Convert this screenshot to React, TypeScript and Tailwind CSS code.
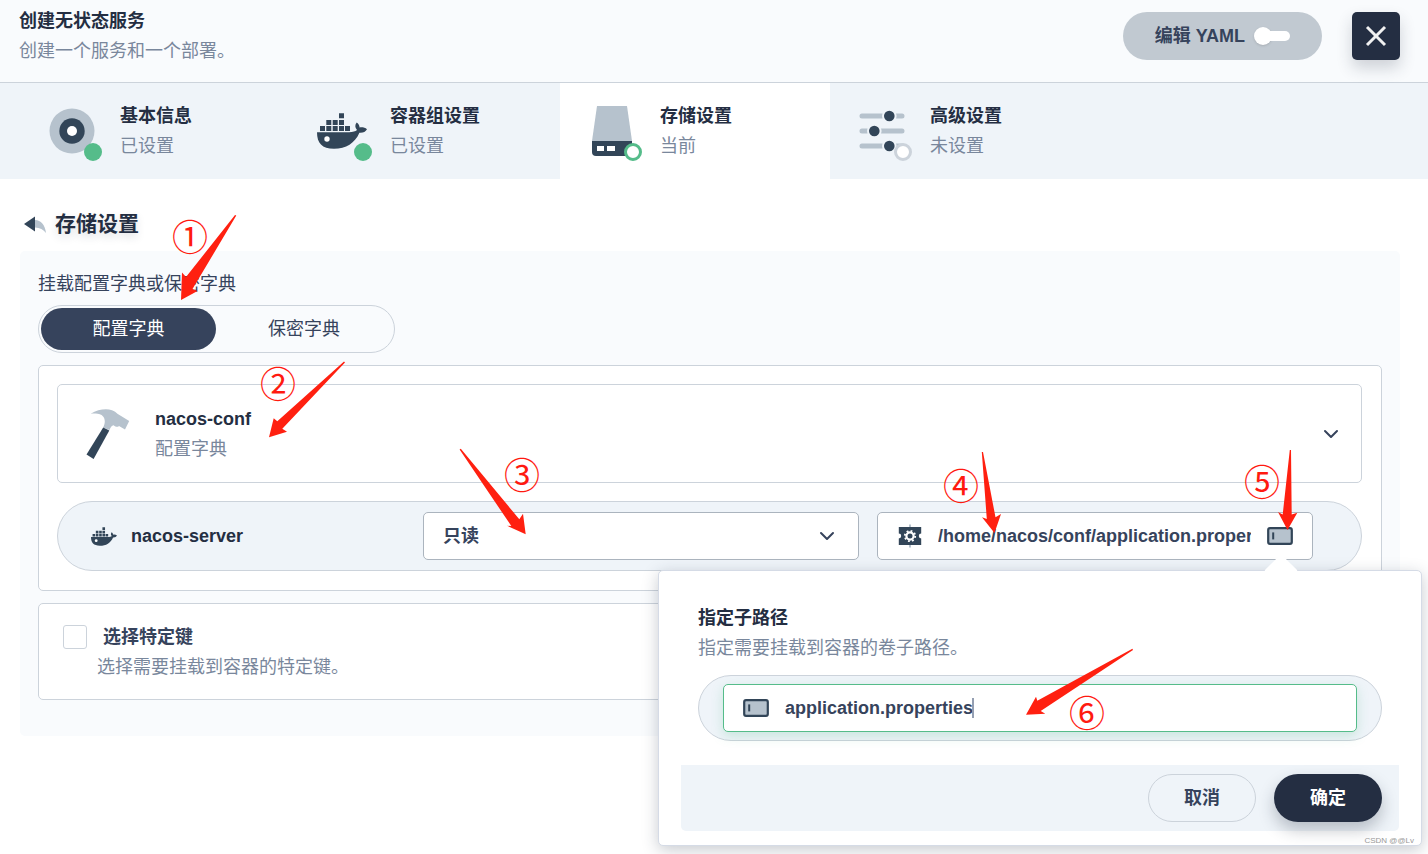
import { useState } from 'react';
import type { ReactNode } from 'react';
import { ChevronDown, X } from 'lucide-react';
import clsx from 'clsx';

type StepStatus = 'done' | 'current' | 'todo';

interface Step {
  id: string;
  title: string;
  desc: string;
  status: StepStatus;
  icon: ReactNode;
}

function DockerIcon({ className }: { className?: string }) {
  return (
    <svg viewBox="0 0 50 36" className={className} fill="#324558" aria-hidden="true">
      <path d="M22 0.3h5v5h-5zM9.3 7h5v5h-5zM15.7 7h5v5h-5zM22 7h5v5h-5zM3 13.1h5v5H3zM9.3 13.1h5v5h-5zM15.7 13.1h5v5h-5zM22 13.1h5v5h-5zM28 13.1h5v5h-5z" />
      <path d="M0 19.2H32C36 19.2 38.4 18.4 40 17C37.8 14.6 37.8 12 39.7 9.6C41.6 11 42.5 12.8 42.6 14.4C45 13.9 48 14.4 50 16.2C48.4 19 46 20 42.4 19.7C38 30 29 35.8 17 35.8C5 35.8 0 30 0 19.2Z" />
      <circle cx="10" cy="26" r="2.7" fill="#fff" />
    </svg>
  );
}

function RecordIcon() {
  return (
    <svg viewBox="0 0 60 60" className="size-[60px]" aria-hidden="true">
      <circle cx="30" cy="30" r="22.5" fill="#b6c2cd" />
      <circle cx="30" cy="30" r="12.7" fill="#324558" />
      <circle cx="30" cy="30" r="5" fill="#fff" />
    </svg>
  );
}

function DiskIcon() {
  return (
    <svg viewBox="0 0 60 60" className="size-[60px]" aria-hidden="true">
      <path d="M15 5h30l5 35H10z" fill="#b6c2cd" />
      <path d="M10 40h40v11a4 4 0 0 1-4 4H14a4 4 0 0 1-4-4z" fill="#324558" />
      <path d="M15 45h7v5h-7zM25 45h8v5h-8z" fill="#fff" />
    </svg>
  );
}

function SlidersIcon() {
  return (
    <svg viewBox="0 0 60 60" className="size-[60px]" aria-hidden="true">
      <path d="M10 15h40M10 30h40M10 45h40" stroke="#b6c2cd" strokeWidth="5" strokeLinecap="round" />
      <g fill="#324558" stroke="#eff4f9" strokeWidth="2">
        <circle cx="37.3" cy="15" r="6.3" />
        <circle cx="22.3" cy="30" r="6.3" />
        <circle cx="37.3" cy="45" r="6.3" />
      </g>
    </svg>
  );
}

function HammerIcon() {
  return (
    <svg viewBox="0 0 44 50" className="h-[50px] w-11 shrink-0" aria-hidden="true">
      <path
        d="M4.6 4.8C12 0.4 20 -0.6 26 1.2C28.4 2 30 3.4 31.4 4.8L43.2 12L39 20.4L33 17C31.4 18.6 29.6 17.8 27.6 16.2C25.6 16.2 24.6 18.4 23.4 21L17.2 18.4C18.6 15.4 19.4 12.6 18.2 9.2C16.4 4.8 10.6 4.2 4.6 4.8Z"
        fill="#b6c2cd"
      />
      <path d="M17.2 18.6L23.3 21.4L7.6 50L0.5 45.6Z" fill="#324558" />
    </svg>
  );
}

function BackIcon() {
  return (
    <svg viewBox="0 0 24 18" className="h-[18px] w-6" aria-hidden="true">
      <path d="M12 5C18 5.4 22 9.6 23 18C20.4 14.6 17 12.8 12 12.6Z" fill="#b6c2cd" />
      <path d="M1 9L12 1.4V16.6Z" fill="#324558" />
    </svg>
  );
}

function MountIcon() {
  return (
    <svg viewBox="0 0 24 24" className="size-6 shrink-0" aria-hidden="true">
      <path d="M11 0.6h2v22.8h-2z" fill="#b6c2cd" />
      <path d="M0.8 3h22.4v6.6a2.4 2.4 0 0 0 0 4.8V21H0.8v-6.6a2.4 2.4 0 0 0 0-4.8z" fill="#324558" />
      <circle cx="12" cy="12" r="3.6" fill="none" stroke="#fff" strokeWidth="2.2" />
      <circle cx="12" cy="12" r="5.2" fill="none" stroke="#fff" strokeWidth="1.8" strokeDasharray="1.8 2.28" />
    </svg>
  );
}

function SlotIcon() {
  return (
    <svg viewBox="0 0 26 18" className="h-[18px] w-[26px] shrink-0" aria-hidden="true">
      <rect x="1.2" y="1.2" width="23.6" height="15.6" rx="1.8" fill="#b6c2cd" stroke="#324558" strokeWidth="2.2" />
      <path d="M5.2 5.4h2v7h-2z" fill="#324558" />
    </svg>
  );
}

const steps: Step[] = [
  { id: 'base', title: '基本信息', desc: '已设置', status: 'done', icon: <RecordIcon /> },
  { id: 'pod', title: '容器组设置', desc: '已设置', status: 'done', icon: <DockerIcon className="h-9 w-[50px]" /> },
  { id: 'volume', title: '存储设置', desc: '当前', status: 'current', icon: <DiskIcon /> },
  { id: 'advanced', title: '高级设置', desc: '未设置', status: 'todo', icon: <SlidersIcon /> },
];

const marks = [
  { label: '①', x: 190, y: 235, arrow: '235,215 186,277 182,272.5 181,300 197.5,291 192.5,289 236.3,215.6' },
  { label: '②', x: 278, y: 382, arrow: '344,361.6 277.3,421.3 273.7,418.3 269,437.3 287,431.7 282.3,428.7 345,362.6' },
  { label: '③', x: 522, y: 473, arrow: '459.6,449.6 511.3,526 507,525.7 525.7,534.3 523,513.7 519.3,519.3 460.8,448.8' },
  { label: '④', x: 961, y: 484, arrow: '981.8,452 986.8,519 982,517.3 994.5,533 1001,514 995.5,517.3 983,452' },
  { label: '⑤', x: 1262, y: 480, arrow: '1289.8,450 1282.7,514.5 1278,512 1287.5,530 1297.3,512.7 1291.7,514.5 1291,450' },
  { label: '⑥', x: 1087, y: 711, arrow: '1132.4,648.8 1037.3,700.7 1036,696.7 1026,714.7 1045.3,713.7 1040.7,711 1133,650' },
];

function StepTab({ step }: { step: Step }) {
  return (
    <button
      type="button"
      className={clsx(
        'flex h-24 w-[270px] items-center gap-[18px] pl-[22px] text-left',
        step.status === 'current' && 'bg-white',
      )}
    >
      <span className="relative flex size-[60px] items-center justify-center">
        {step.icon}
        <span
          className={clsx(
            'absolute right-0 bottom-0 size-[18px] rounded-full',
            step.status === 'done' && 'bg-[#55bc8a]',
            step.status === 'current' && 'border-3 border-[#55bc8a] bg-white',
            step.status === 'todo' && 'border-3 border-[#ccd3db] bg-white',
          )}
        />
      </span>
      <span>
        <span className="block font-bold text-[#242e42]">{step.title}</span>
        <span className="block text-[#79879c]">{step.desc}</span>
      </span>
    </button>
  );
}

function SubPathPopup() {
  const [subPath, setSubPath] = useState('application.properties');

  return (
    <div
      role="dialog"
      aria-labelledby="subpath-title"
      className="absolute top-[57px] right-[-110px] z-10 w-[764px] rounded-[5px] border border-[#d5dbe6] bg-white pb-3.5 shadow-[0_4px_16px_rgba(36,46,66,0.25)]"
    >
      <span className="absolute top-[-12px] right-[128px] size-6 rotate-45 rounded-xs bg-white" />
      <div className="relative px-[39px] pt-8 pb-6">
        <h3 id="subpath-title" className="font-bold text-[#242e42]">指定子路径</h3>
        <p className="text-[#79879c]">指定需要挂载到容器的卷子路径。</p>
        <div className="mt-3 rounded-full border border-[#ccd3db] bg-[#eff4f9] px-6 py-2">
          <label className="flex h-12 items-center rounded-[5px] border border-[#55bc8a] bg-white pl-[19px] shadow-[0_4px_12px_rgba(85,188,138,0.25)]">
            <SlotIcon />
            <input
              type="text"
              aria-label="指定子路径"
              value={subPath}
              onChange={e => setSubPath(e.target.value)}
              className="ml-4 field-sizing-content bg-transparent font-bold text-[#36435c] outline-none"
            />
            <span className="-ml-px h-5 w-0.5 bg-[#959fb2]" />
          </label>
        </div>
      </div>
      <div className="mx-[22px] flex justify-end gap-[18px] rounded-b-[5px] bg-[#eff4f9] px-[17px] py-[9px]">
        <button
          type="button"
          className="h-12 w-[108px] rounded-full border border-[#ccd3db] font-bold text-[#36435c]"
        >
          取消
        </button>
        <button
          type="button"
          className="h-12 w-[108px] rounded-full bg-[#242e42] font-bold text-white shadow-[0_8px_16px_rgba(36,46,66,0.28)]"
        >
          确定
        </button>
      </div>
    </div>
  );
}

function Annotations() {
  return (
    <div className="pointer-events-none absolute inset-0 z-20 overflow-hidden">
      <svg width="1428" height="854" className="absolute top-0 left-0" fill="#ff2010" aria-hidden="true">
        {marks.map(mark => (
          <polygon key={mark.label} points={mark.arrow} />
        ))}
      </svg>
      {marks.map(mark => (
        <span
          key={mark.label}
          className="absolute flex size-10 -translate-x-1/2 -translate-y-1/2 items-center justify-center font-['Noto_Sans_CJK_SC',sans-serif] text-[36px] leading-10 text-[#ff1a10]"
          style={{ left: mark.x, top: mark.y }}
        >
          {mark.label}
        </span>
      ))}
    </div>
  );
}

export default function App() {
  const [kind, setKind] = useState('configmap');
  const [mountPath, setMountPath] = useState('/home/nacos/conf/application.properties');

  return (
    <div className="relative min-h-screen bg-white font-['Liberation_Sans','Noto_Sans_CJK_SC',sans-serif] text-[18px] leading-[30px] text-[#36435c]">
      <header className="flex items-start justify-between border-b border-[#ccd3db] bg-[#f9fbfd] pr-7 pb-4 pl-[19px]">
        <div className="pt-1.5">
          <h1 className="font-bold text-[#242e42]">创建无状态服务</h1>
          <p className="text-[#79879c]">创建一个服务和一个部署。</p>
        </div>
        <div className="flex gap-[30px] pt-3">
          <label className="flex h-12 items-center gap-[9px] rounded-full bg-[#c1c9d1] px-8 font-bold">
            编辑 YAML
            <input type="checkbox" role="switch" className="sr-only" />
            <span className="flex w-9 items-center">
              <span className="size-[18px] rounded-full bg-white shadow-sm" />
              <span className="-ml-1 h-2.5 flex-1 rounded-r-full bg-white" />
            </span>
          </label>
          <button
            type="button"
            aria-label="关闭"
            className="flex size-12 items-center justify-center rounded-[5px] bg-[#242e42] text-[#f1f1f1] shadow-[0_8px_16px_rgba(36,46,66,0.2)]"
          >
            <X size={36} strokeWidth={2} strokeLinecap="butt" />
          </button>
        </div>
      </header>

      <nav className="flex bg-[#eff4f9] pl-5">
        {steps.map(step => (
          <StepTab key={step.id} step={step} />
        ))}
      </nav>

      <main className="pt-[30px] pr-7 pl-5">
        <div className="flex items-center gap-2 pl-[3px]">
          <button type="button" aria-label="返回">
            <BackIcon />
          </button>
          <h2 className="text-[21px] font-bold text-[#242e42] [text-shadow:0_4px_8px_rgba(36,46,66,0.15)]">
            存储设置
          </h2>
        </div>

        <section className="mt-3 rounded-[5px] bg-[#f9fbfd] px-[18px] pt-[18px] pb-9">
          <p>挂载配置字典或保密字典</p>
          <div className="mt-1.5 inline-flex h-12 rounded-full border border-[#ccd3db] bg-[#f9fbfd] p-0.5 align-top">
            <button
              type="button"
              onClick={() => setKind('configmap')}
              className={clsx('w-[175px] rounded-full', kind === 'configmap' && 'bg-[#36435c] text-white')}
            >
              配置字典
            </button>
            <button
              type="button"
              onClick={() => setKind('secret')}
              className={clsx('w-[176px] rounded-full', kind === 'secret' && 'bg-[#36435c] text-white')}
            >
              保密字典
            </button>
          </div>

          <div className="mt-3 rounded-[5px] border border-[#ccd3db] bg-white pt-[18px] pr-[19px] pb-[19px] pl-[18px]">
            <button
              type="button"
              className="flex h-[99px] w-full items-center rounded-[5px] border border-[#ccd3db] bg-white pr-[18px] pl-7 text-left"
            >
              <HammerIcon />
              <span className="ml-[25px] flex-1">
                <span className="block font-bold text-[#242e42]">nacos-conf</span>
                <span className="block text-[#79879c]">配置字典</span>
              </span>
              <ChevronDown size={24} />
            </button>

            <div className="mt-[18px] flex h-[70px] items-center rounded-full border border-[#ccd3db] bg-[#eff4f9] pr-12 pl-[33px]">
              <div className="flex w-[332px] items-center gap-3.5">
                <DockerIcon className="h-[19px] w-[26px]" />
                <span className="font-bold text-[#242e42]">nacos-server</span>
              </div>
              <div className="grid flex-1 grid-cols-2 gap-[18px]">
                <div className="relative">
                  <select
                    aria-label="读写模式"
                    className="h-12 w-full appearance-none rounded-[5px] border border-[#abb4be] bg-white px-[19px] font-bold"
                  >
                    <option>只读</option>
                    <option>读写</option>
                  </select>
                  <ChevronDown size={24} className="pointer-events-none absolute top-3 right-5" />
                </div>
                <div className="relative flex h-12 items-center rounded-[5px] border border-[#abb4be] bg-white pr-[19px] pl-5">
                  <MountIcon />
                  <input
                    type="text"
                    aria-label="挂载路径"
                    value={mountPath}
                    onChange={e => setMountPath(e.target.value)}
                    className="ml-4 min-w-0 flex-1 bg-transparent font-bold outline-none"
                  />
                  <button type="button" aria-label="指定子路径" className="ml-4">
                    <SlotIcon />
                  </button>
                  <SubPathPopup />
                </div>
              </div>
            </div>
          </div>

          <div className="mt-3 rounded-[5px] border border-[#ccd3db] bg-white pt-[18px] pb-[17px] pl-6">
            <label className="flex items-center gap-4 font-bold">
              <input
                type="checkbox"
                className="size-6 appearance-none rounded-[3px] border border-[#ccd3db] bg-white"
              />
              选择特定键
            </label>
            <p className="pl-[34px] text-[#79879c]">选择需要挂载到容器的特定键。</p>
          </div>
        </section>
      </main>

      <Annotations />
      <span className="absolute right-3.5 bottom-[7px] z-20 text-[8px] leading-3 text-[#999]">CSDN @@Lv</span>
    </div>
  );
}
